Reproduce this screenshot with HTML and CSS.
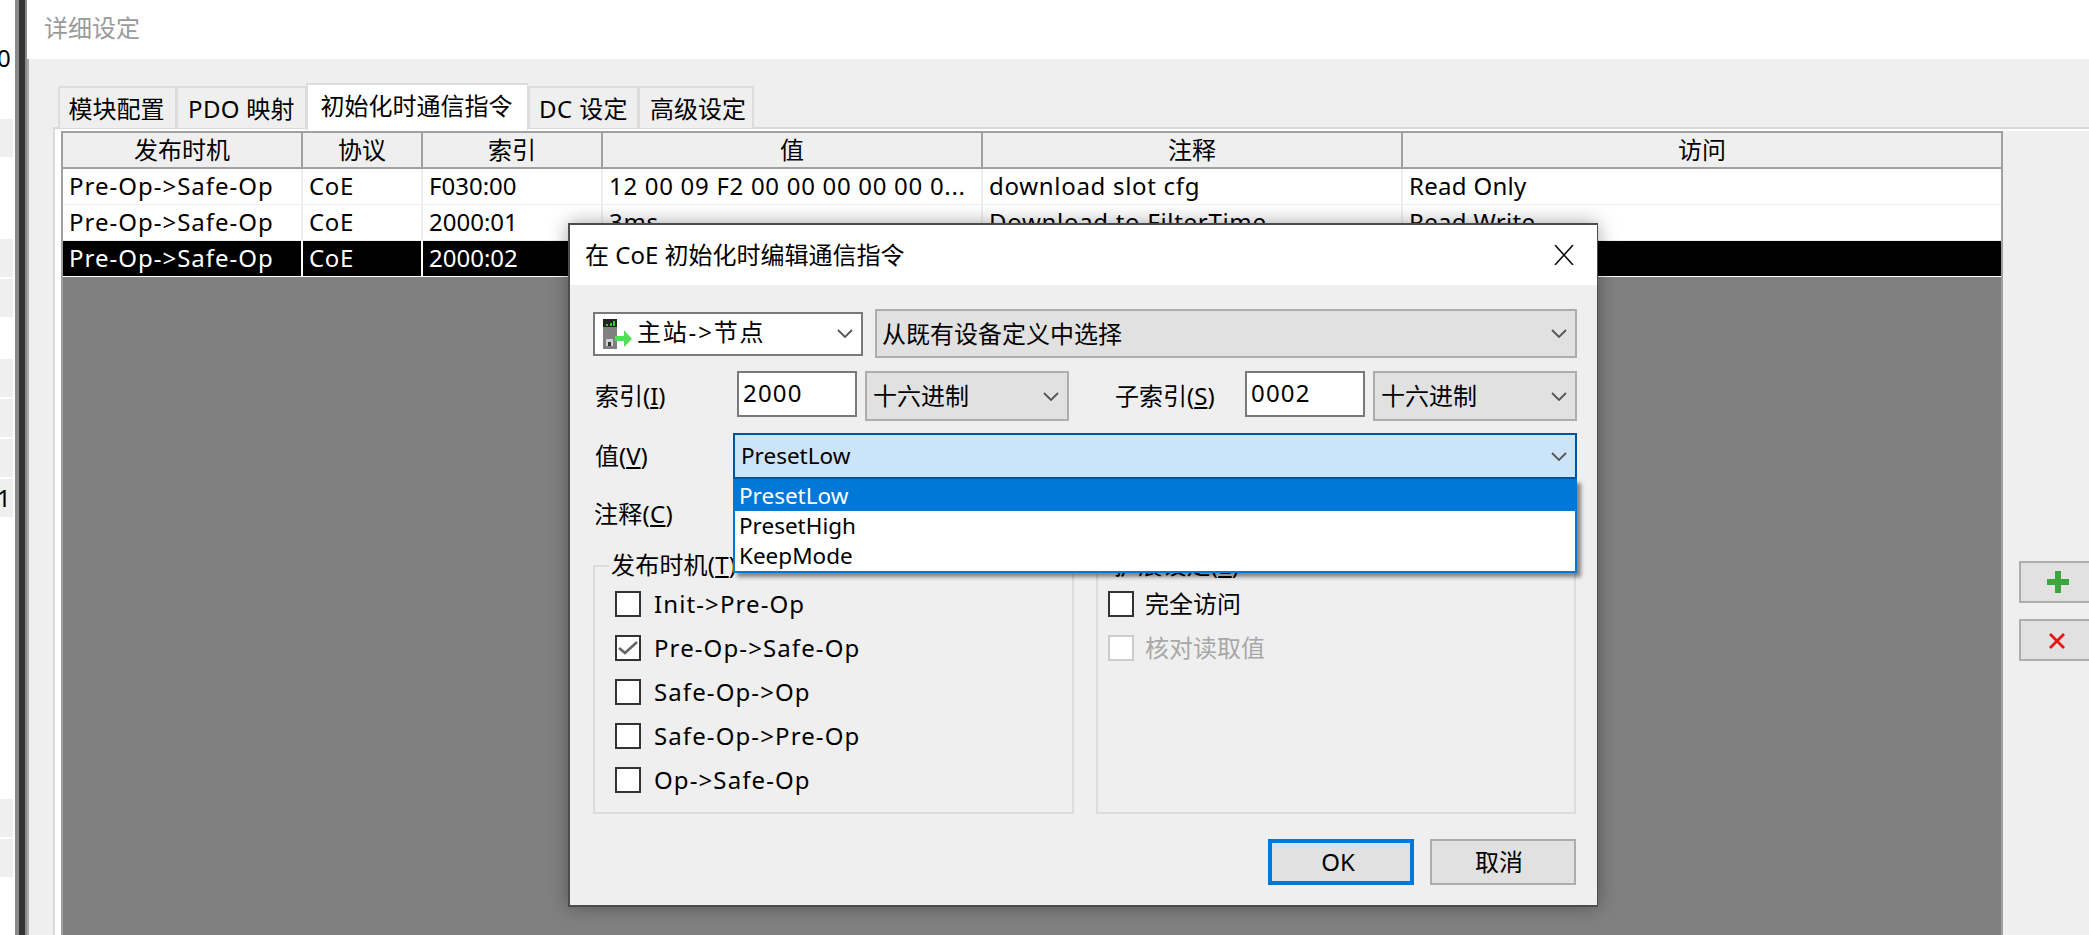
FILE: index.html
```html
<!DOCTYPE html>
<html lang="zh-CN">
<head>
<meta charset="utf-8">
<title>详细设定</title>
<link rel="stylesheet" href="styles.css">
</head>
<body>
<div class="strip">
  <div class="strip-row"></div>
  <div class="strip-row strip-text">0</div>
  <div class="strip-row"></div>
  <div class="strip-row shade"></div>
  <div class="strip-row"></div>
  <div class="strip-row"></div>
  <div class="strip-row shade"></div>
  <div class="strip-row shade"></div>
  <div class="strip-row"></div>
  <div class="strip-row shade"></div>
  <div class="strip-row shade"></div>
  <div class="strip-row shade"></div>
  <div class="strip-row shade strip-text">1</div>
  <div class="strip-row"></div>
  <div class="strip-row"></div>
  <div class="strip-row"></div>
  <div class="strip-row"></div>
  <div class="strip-row"></div>
  <div class="strip-row"></div>
  <div class="strip-row"></div>
  <div class="strip-row shade"></div>
  <div class="strip-row shade"></div>
  <div class="strip-row"></div>
  <div class="strip-row"></div>
</div>
<div class="splitter"></div>
<main class="main">
  <header class="page-title">详细设定</header>
  <div class="main-body">
    <div class="edge"></div>
    <div class="content">
      <nav class="tabs">
        <div class="tab tab-1">模块配置</div>
        <div class="tab tab-2">PDO 映射</div>
        <div class="tab tab-3 active">初始化时通信指令</div>
        <div class="tab tab-4">DC 设定</div>
        <div class="tab tab-5">高级设定</div>
      </nav>
      <section class="pane">
        <div class="pane-row">
          <div class="list-wrap">
            <div class="list">
              <div class="row head">
                <div class="cell">发布时机</div><div class="cell">协议</div><div class="cell">索引</div><div class="cell">值</div><div class="cell">注释</div><div class="cell">访问</div>
              </div>
              <div class="row">
                <div class="cell">Pre-Op-&gt;Safe-Op</div><div class="cell">CoE</div><div class="cell">F030:00</div><div class="cell">12 00 09 F2 00 00 00 00 00 0...</div><div class="cell">download slot cfg</div><div class="cell">Read Only</div>
              </div>
              <div class="row">
                <div class="cell">Pre-Op-&gt;Safe-Op</div><div class="cell">CoE</div><div class="cell">2000:01</div><div class="cell">3ms</div><div class="cell">Download to FilterTime</div><div class="cell">Read Write</div>
              </div>
              <div class="row selected">
                <div class="cell">Pre-Op-&gt;Safe-Op</div><div class="cell">CoE</div><div class="cell">2000:02</div><div class="cell"></div><div class="cell"></div><div class="cell"></div>
              </div>
            </div>
          </div>
          <aside class="side">
            <button class="side-btn">
              <svg class="side-icon" viewBox="0 0 22 22"><path d="M8 0h6v8h8v6h-8v8H8v-8H0V8h8z" fill="#3da63d"/></svg>
            </button>
            <button class="side-btn">
              <svg class="side-icon-x" viewBox="0 0 16 16"><path d="M1 1l14 14M15 1L1 15" stroke="#f01010" stroke-width="2.8" fill="none"/></svg>
            </button>
          </aside>
        </div>
      </section>
    </div>
  </div>
</main>

<div class="dialog">
  <div class="dialog-title">
    <span>在 CoE 初始化时编辑通信指令</span>
    <svg class="close" viewBox="0 0 20 20"><path d="M1 0l18 20M19 0L1 20" stroke="#111" stroke-width="1.6" fill="none"/></svg>
  </div>
  <div class="dialog-body">
    <div class="form-row row-a">
      <div class="combo combo-light combo-dir">
        <span class="combo-value">
          <svg class="dir-icon" viewBox="0 0 29 30">
            <rect x="0" y="0" width="14" height="30" fill="#808080"/>
            <rect x="0" y="0" width="14" height="8" fill="#222"/>
            <rect x="3" y="5" width="2" height="2" fill="#3c3"/><rect x="7" y="4" width="2" height="3" fill="#3c3"/><rect x="10" y="2" width="2" height="5" fill="#3c3"/>
            <rect x="3" y="20" width="7" height="7" fill="#cfcfcf"/><rect x="5" y="23" width="3" height="4" fill="#333"/>
            <path d="M12 17h9v-6l8 9-8 8v-6h-9z" fill="#55dd55"/>
          </svg>
          <span class="dir-text">主站-&gt;节点</span>
        </span>
        <svg class="chev" viewBox="0 0 16 9"><path d="M1 1l7 7 7-7" fill="none" stroke="#555" stroke-width="1.8"/></svg>
      </div>
      <div class="combo combo-gray combo-def">
        <span>从既有设备定义中选择</span>
        <svg class="chev" viewBox="0 0 16 9"><path d="M1 1l7 7 7-7" fill="none" stroke="#555" stroke-width="1.8"/></svg>
      </div>
    </div>
    <div class="form-row row-b">
      <label class="lbl lbl-index">索引(<u>I</u>)</label>
      <div class="field">2000</div>
      <div class="combo combo-gray combo-base">
        <span>十六进制</span>
        <svg class="chev" viewBox="0 0 16 9"><path d="M1 1l7 7 7-7" fill="none" stroke="#555" stroke-width="1.8"/></svg>
      </div>
      <label class="lbl lbl-sub">子索引(<u>S</u>)</label>
      <div class="field">0002</div>
      <div class="combo combo-gray combo-base">
        <span>十六进制</span>
        <svg class="chev" viewBox="0 0 16 9"><path d="M1 1l7 7 7-7" fill="none" stroke="#555" stroke-width="1.8"/></svg>
      </div>
    </div>
    <div class="form-row row-c">
      <label class="lbl lbl-value">值(<u>V</u>)</label>
      <div class="combo combo-open">
        <span>PresetLow</span>
        <svg class="chev" viewBox="0 0 16 9"><path d="M1 1l7 7 7-7" fill="none" stroke="#555" stroke-width="1.8"/></svg>
        <ul class="dropdown">
          <li class="opt opt-on">PresetLow</li>
          <li class="opt">PresetHigh</li>
          <li class="opt">KeepMode</li>
        </ul>
      </div>
    </div>
    <div class="form-row row-d">
      <label class="lbl lbl-note">注释(<u>C</u>)</label>
      <div class="field field-note"></div>
    </div>
    <div class="groups">
      <div class="group group-left">
        <div class="legend legend-left">发布时机(<u>T</u>)</div>
        <div class="check-row"><span class="box"></span><span>Init-&gt;Pre-Op</span></div>
        <div class="check-row"><span class="box"><svg class="tick" viewBox="0 0 20 14"><path d="M1 7l6 5L19 1" fill="none" stroke="#666" stroke-width="2.6"/></svg></span><span>Pre-Op-&gt;Safe-Op</span></div>
        <div class="check-row"><span class="box"></span><span>Safe-Op-&gt;Op</span></div>
        <div class="check-row"><span class="box"></span><span>Safe-Op-&gt;Pre-Op</span></div>
        <div class="check-row"><span class="box"></span><span>Op-&gt;Safe-Op</span></div>
      </div>
      <div class="group group-right">
        <div class="legend legend-right">扩展设定(<u>E</u>)</div>
        <div class="check-row"><span class="box"></span><span>完全访问</span></div>
        <div class="check-row disabled"><span class="box"></span><span>核对读取值</span></div>
      </div>
    </div>
    <div class="actions">
      <button class="btn btn-default">OK</button>
      <button class="btn btn-cancel">取消</button>
    </div>
  </div>
</div>
</body>
</html>
```
FILE: styles.css
```css
* { box-sizing: border-box; }
html, body { margin: 0; padding: 0; }
body {
  width: 2089px;
  height: 935px;
  overflow: hidden;
  position: relative;
  display: flex;
  background: #fff;
  color: #000;
  font-family: "Noto Sans", "Noto Sans CJK SC", sans-serif;
  font-size: 24px;
  line-height: 32px;
}
u { text-decoration: underline; }

/* left sliver */
.strip { width: 15px; height: 935px; padding-right: 2px; margin-top: -1px; background: #fff; flex: none; overflow: hidden; }
.strip-row { height: 38px; margin-bottom: 2px; display: flex; justify-content: flex-end; align-items: center; overflow: hidden; }
.strip-text { justify-content: flex-start; text-indent: -3px; }
.shade { background: #efefef; }
.splitter { width: 12px; flex: none; background: linear-gradient(to right, #8a8a8a 0 4px, #333 4px 10px, #8a8a8a 10px 12px); }

/* main */
.main { flex: 1; min-width: 0; display: flex; flex-direction: column; }
.page-title { height: 59px; padding: 12px 0 0 17px; color: #9a9a9a; background: #fff; flex: none; }
.main-body { flex: 1; display: flex; background: #efefef; min-height: 0; }
.edge { width: 2px; flex: none; background: #a8a8a8; }
.content { flex: 1; min-width: 0; padding: 24px 0 0 24px; display: flex; flex-direction: column; }

.tabs { display: flex; align-items: flex-end; height: 47px; margin-bottom: -3px; padding-left: 5px; position: relative; z-index: 1; flex: none; }
.tab { height: 42px; margin-bottom: 2px; border: 2px solid #dcdcdc; border-bottom: 0; border-right-width: 1px; background: #efefef; display: flex; align-items: center; justify-content: center; padding-top: 2px; white-space: nowrap; }
.tab-1 { width: 118px; padding-right: 2px; }
.tab-2 { width: 130px; letter-spacing: .3px; }
.tab-3 { width: 222px; }
.tab-4 { width: 110px; padding-left: 0; letter-spacing: .4px; }
.tab-5 { width: 116px; border-right-width: 2px; padding-left: 4px; }
.tab.active { height: 47px; margin-bottom: 0; background: #fff; padding: 0 2px 4px 0; }

.pane { flex: 1; min-height: 0; border-top: 2px solid #d9d9d9; border-left: 2px solid #d9d9d9; background: #fff; padding-top: 2px; display: flex; }
.pane-row { flex: 1; display: flex; min-width: 0; }
.list-wrap { width: 1948px; padding-left: 6px; background: #fff; flex: none; }
.list { height: 100%; background: #808080; border: 2px solid #a0a0a0; border-bottom: 0; }
.row { display: grid; grid-template-columns: 240px 120px 180px 380px 420px 1fr; height: 36px; background: #fff; line-height: 34px; }
.cell { padding-left: 6px; white-space: nowrap; overflow: hidden; border-right: 2px solid #efefef; border-bottom: 1px solid #efefef; }
.cell:nth-child(1) { letter-spacing: 1px; }
.cell:nth-child(2) { letter-spacing: .6px; }
.cell:nth-child(4), .cell:nth-child(5) { letter-spacing: .7px; }
.cell:nth-child(6) { letter-spacing: .3px; }
.cell:last-child { border-right: 0; }
.row.head { height: 36px; background: #efefef; }
.row.head .cell { text-align: center; padding-left: 0; letter-spacing: 0; border-right-color: #a0a0a0; border-bottom: 2px solid #a0a0a0; }
.row.selected { background: #000; color: #fff; height: 36px; }
.row.selected .cell { border-right-color: #fff; border-bottom-color: #fff; }

.side { flex: 1; background: #efefef; padding: 430px 0 0 16px; display: flex; flex-direction: column; gap: 16px; }
.side-btn { width: 80px; height: 42px; padding: 0 0 0 26px; border: 2px solid #adadad; border-right: 0; background: #e1e1e1; display: flex; align-items: center; flex: none; }
.side-icon { width: 22px; height: 22px; }
.side-icon-x { width: 16px; height: 16px; margin: 2px 0 0 2px; }

/* dialog window */
.dialog { position: absolute; left: 568px; top: 223px; width: 1030px; height: 684px; border: 2px solid #4c4c4c; border-right-width: 1px; background: #efefef; box-shadow: 0 0 18px rgba(0,0,0,.35); display: flex; flex-direction: column; }
.dialog-title { height: 60px; background: #fff; flex: none; display: flex; align-items: center; justify-content: space-between; padding: 0 23px 0 15px; }
.close { width: 20px; height: 20px; }
.dialog-body { flex: 1; padding: 24px 20px 0 23px; display: flex; flex-direction: column; }
.form-row { display: flex; flex: none; }
.row-a { align-items: center; gap: 12px; height: 49px; }
.row-b { margin-top: 13px; align-items: flex-start; height: 50px; }
.row-c { margin-top: 12px; height: 46px; position: relative; z-index: 2; }
.row-d { margin-top: 12px; height: 50px; align-items: center; }

.lbl { margin-left: 2px; flex: none; }
.lbl-index { width: 142px; line-height: 50px; }
.lbl-sub { width: 130px; margin-left: 46px; line-height: 50px; }
.lbl-value { width: 138px; line-height: 46px; }
.lbl-note { width: 142px; line-height: 46px; margin-left: 1px; padding-bottom: 4px; letter-spacing: .3px; }

.field { width: 120px; height: 46px; border: 2px solid #7a7a7a; background: #fff; padding-left: 4px; line-height: 40px; flex: none; margin-right: 8px; letter-spacing: 1.2px; }
.field-note { width: 840px; margin-right: 0; }

.combo { display: flex; align-items: center; justify-content: space-between; border: 2px solid #adadad; padding: 0 8px 0 6px; flex: none; }
.combo-light { background: #fff; border-color: #7a7a7a; }
.combo-gray { background: #e1e1e1; }
.combo-dir { width: 270px; height: 44px; padding-right: 8px; padding-left: 8px; }
.combo-def { width: 702px; height: 49px; padding-left: 5px; }
.combo-base { width: 204px; height: 50px; }
.combo-open { width: 844px; height: 46px; background: #cce4f7; border-color: #00549c; position: relative; font-size: 22.5px; }
.combo-value { display: flex; align-items: center; gap: 5px; }
.dir-icon { width: 29px; height: 30px; flex: none; }
.dir-text { letter-spacing: 1.8px; margin-top: -4px; }
.chev { width: 16px; height: 9px; flex: none; }

.dropdown { position: absolute; left: -2px; top: 44px; width: 844px; margin: 0; padding: 0; list-style: none; background: #fff; border: 2px solid #0078d7; border-top: 0; box-shadow: 4px 4px 4px rgba(0,0,0,.45); line-height: 30px; }
.opt { height: 30px; padding-left: 4px; }
.opt-on { height: 32px; margin: 0 -2px; padding-left: 6px; background: #0078d7; color: #fff; line-height: 34px; }

.groups { display: flex; gap: 22px; margin-top: 24px; flex: none; }
.group { width: 481px; height: 249px; border: 2px solid #dcdcdc; position: relative; padding: 24px 0 0 20px; display: flex; flex-direction: column; gap: 18px; }
.group-right { width: 480px; padding-left: 10px; }
.legend { position: absolute; left: 14px; top: -18px; padding: 0 2px; background: #efefef; line-height: 32px; letter-spacing: .2px; }
.check-row { display: flex; align-items: center; gap: 13px; height: 26px; white-space: nowrap; }
.group-left .check-row { letter-spacing: 1.1px; }
.group-right .check-row { gap: 11px; }
.box { width: 26px; height: 26px; border: 2px solid #333; background: #fff; flex: none; display: flex; align-items: center; justify-content: center; }
.tick { width: 20px; height: 14px; }
.disabled { color: #a8a8a8; }
.disabled .box { border-color: #ccc; }

.actions { display: flex; justify-content: flex-end; gap: 16px; margin-top: 25px; padding-right: 1px; flex: none; }
.btn { width: 146px; height: 46px; padding: 0 8px 0 0; border: 2px solid #adadad; background: #e1e1e1; font: inherit; color: #000; }
.btn-default { border: 4px solid #0078d7; margin-left: -1px; padding-right: 6px; }
```
